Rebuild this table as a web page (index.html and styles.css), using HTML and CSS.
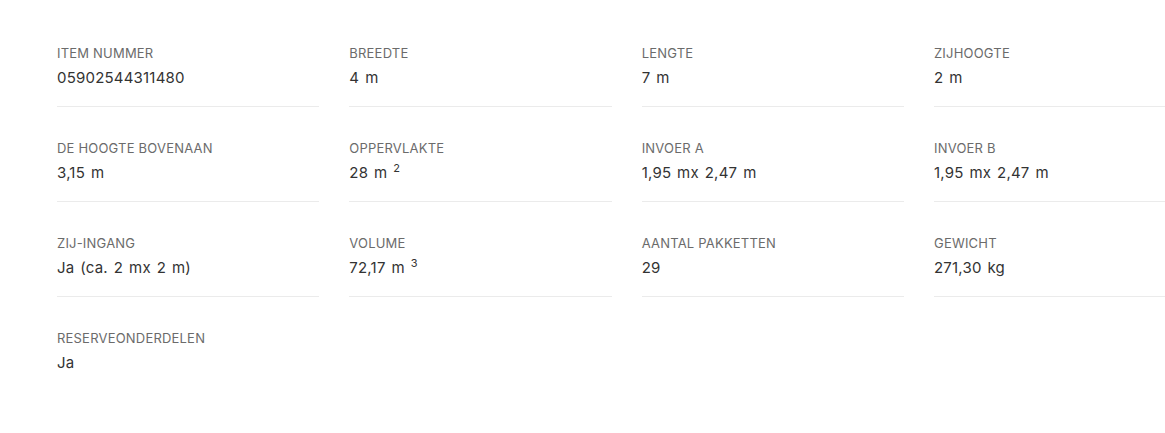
FILE: index.html
```html
<!DOCTYPE html>
<html lang="nl">
<head>
<meta charset="utf-8">
<title>Specificaties</title>
<link rel="stylesheet" href="styles.css">
</head>
<body>
<div class="specs">
  <div class="spec"><div class="label">Item nummer</div><div class="value">05902544311480</div></div>
  <div class="spec"><div class="label">Breedte</div><div class="value">4 m</div></div>
  <div class="spec"><div class="label">Lengte</div><div class="value">7 m</div></div>
  <div class="spec"><div class="label">Zijhoogte</div><div class="value">2 m</div></div>
  <div class="spec"><div class="label">De hoogte bovenaan</div><div class="value">3,15 m</div></div>
  <div class="spec"><div class="label">Oppervlakte</div><div class="value">28 m <sup>2</sup></div></div>
  <div class="spec"><div class="label">Invoer A</div><div class="value">1,95 mx 2,47 m</div></div>
  <div class="spec"><div class="label">Invoer B</div><div class="value">1,95 mx 2,47 m</div></div>
  <div class="spec"><div class="label">Zij-ingang</div><div class="value">Ja (ca. 2 mx 2 m)</div></div>
  <div class="spec"><div class="label">Volume</div><div class="value">72,17 m <sup>3</sup></div></div>
  <div class="spec"><div class="label">Aantal pakketten</div><div class="value">29</div></div>
  <div class="spec"><div class="label">Gewicht</div><div class="value">271,30 kg</div></div>
  <div class="spec spec-last"><div class="label">Reserveonderdelen</div><div class="value">Ja</div></div>
</div>
</body>
</html>
```
FILE: styles.css
```css
html, body {
  margin: 0;
  padding: 0;
  background: #fff;
  overflow: hidden;
}
body {
  font-family: Inter, "Open Sans", sans-serif;
}
.specs {
  display: grid;
  grid-template-columns: repeat(4, 262.33px);
  column-gap: 30px;
  row-gap: 31px;
  width: 1169px;
  padding: 43px 0 0 57px;
}
.spec {
  border-bottom: 1px solid #ebebeb;
  padding-bottom: 16px;
}
.spec-last {
  border-bottom: none;
}
.label {
  font-size: 13px;
  line-height: 20px;
  text-transform: uppercase;
  letter-spacing: 0.2px;
  color: #6b6b6b;
  margin-bottom: 3px;
}
.value {
  font-size: 15px;
  line-height: 24px;
  letter-spacing: 0.2px;
  word-spacing: 1.5px;
  color: #333;
}
.value sup {
  font-size: 11px;
  line-height: 0;
  vertical-align: 6px;
  letter-spacing: 0;
}
```
